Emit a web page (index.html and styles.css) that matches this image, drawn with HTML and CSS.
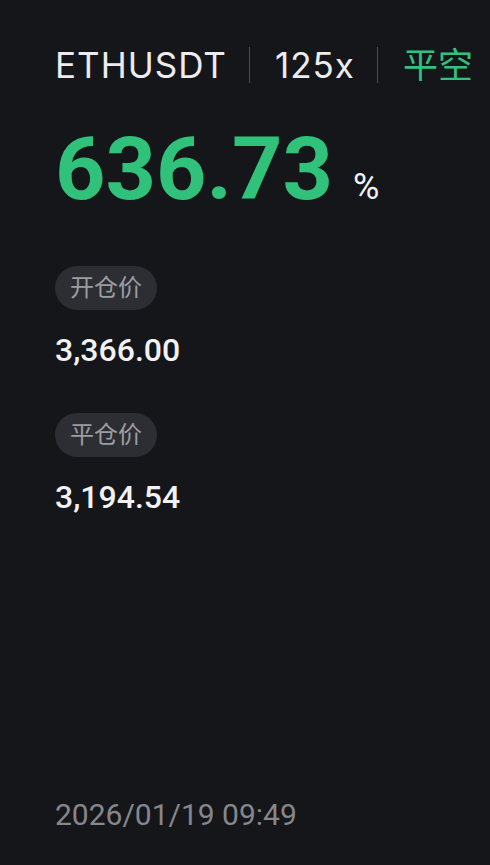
FILE: index.html
```html
<!DOCTYPE html>
<html lang="zh">

<head>
    <meta charset="UTF-8">
    <link rel="stylesheet" href="styles.css">
    <title>ETHUSDT</title>
</head>

<body>
    <div id="card">
        <header class="head">
            <span class="symbol">ETHUSDT</span>
            <span class="sep"></span>
            <span class="lever">125x</span>
            <span class="sep"></span>
            <span class="side">平空</span>
        </header>

        <div class="pnl">
            <span class="pnl-value">636.73</span>
            <span class="pnl-unit">%</span>
        </div>

        <div class="price">
            <span class="tag">开仓价</span>
            <p class="price-value">3,366.00</p>
        </div>

        <div class="price">
            <span class="tag">平仓价</span>
            <p class="price-value">3,194.54</p>
        </div>

        <footer class="time">2026/01/19 09:49</footer>
    </div>
</body>

</html>
```

FILE: styles.css
```css
html,
body {
    margin: 0;
    height: 100%;
}

body {
    background-color: #15161a;
    color: #f2f2f4;
    font-family: Roboto, "Noto Sans CJK SC", sans-serif;
}

#card {
    display: flex;
    flex-direction: column;
    height: 100%;
    box-sizing: border-box;
    padding: 40px 0 30px 55px;
}

.head {
    display: flex;
    align-items: center;
    gap: 22px;
    color: #ececee;
    font-family: Inter, "Noto Sans CJK SC", sans-serif;
    font-size: 35px;
    line-height: 50px;
}

.symbol,
.lever {
    letter-spacing: 1px;
}

.sep {
    width: 1px;
    height: 36px;
    margin-right: 3px;
    background-color: #4a4b50;
}

.side {
    color: #34c17e;
}

.pnl {
    display: flex;
    align-items: baseline;
    gap: 20px;
    margin-top: 31px;
}

.pnl-value {
    color: #30c27b;
    font-size: 88px;
    font-weight: 700;
    line-height: 96px;
}

.pnl-unit {
    font-size: 36px;
}

.price {
    display: flex;
    flex-direction: column;
    align-items: flex-start;
    margin-top: 49px;
}

.price + .price {
    margin-top: 43px;
}

.tag {
    padding: 0 15px;
    background-color: #2d2e33;
    color: #9c9da2;
    font-size: 24px;
    line-height: 44px;
    border-radius: 22px;
}

.price-value {
    margin: 20px 0 0;
    font-size: 32px;
    font-weight: 500;
    line-height: 40px;
}

.time {
    margin-top: auto;
    color: #86878c;
    font-size: 30px;
    line-height: 40px;
}
```
